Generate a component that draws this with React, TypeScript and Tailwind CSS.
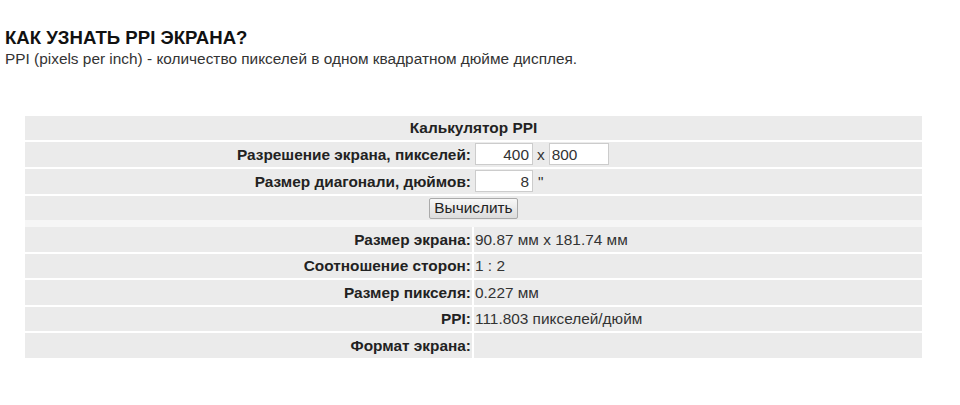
export default function App() {
  const results = [
    { label: "Размер экрана:", value: "90.87 мм x 181.74 мм" },
    { label: "Соотношение сторон:", value: "1 : 2" },
    { label: "Размер пикселя:", value: "0.227 мм" },
    { label: "PPI:", value: "111.803 пикселей/дюйм" },
    { label: "Формат экрана:", value: "" },
  ];

  return (
    <div className="w-[960px] h-[405px] bg-white text-[#222] font-['Liberation_Sans',Arial,sans-serif] overflow-hidden">
      <div className="pl-[5px] pt-[27px]">
        <h1 className="text-[18.6px] leading-[22px] font-bold text-[#111]">КАК УЗНАТЬ PPI ЭКРАНА?</h1>
        <p className="text-[15.4px] leading-[18px] mt-[1px] text-[#333]">
          PPI (pixels per inch) - количество пикселей в одном квадратном дюйме дисплея.
        </p>
      </div>

      {/* calculator form */}
      <div className="ml-[25px] mt-[48px] w-[897px] flex flex-col gap-[2px] text-[15.4px]">
        <div className="h-[24px] bg-[#ebebeb] flex items-center justify-center font-bold">Калькулятор PPI</div>
        <div className="h-[25px] bg-[#ebebeb] grid grid-cols-[447px_1fr] gap-x-[2px] items-center">
          <div className="text-right font-bold pr-[1px]">Разрешение экрана, пикселей:</div>
          <div className="flex items-center pl-[1px]">
            <input
              defaultValue="400"
              className="w-[58px] h-[22px] bg-white border border-[#ccc] text-right px-[3px] text-[15.4px] text-[#333] outline-none"
            />
            <span className="mx-[4px] text-[#333]">x</span>
            <input
              defaultValue="800"
              className="w-[60px] h-[22px] bg-white border border-[#ccc] text-left px-[2px] text-[15.4px] text-[#333] outline-none"
            />
          </div>
        </div>
        <div className="h-[25px] bg-[#ebebeb] grid grid-cols-[447px_1fr] gap-x-[2px] items-center">
          <div className="text-right font-bold pr-[1px]">Размер диагонали, дюймов:</div>
          <div className="flex items-center pl-[1px]">
            <input
              defaultValue="8"
              className="w-[58px] h-[22px] bg-white border border-[#ccc] text-right px-[3px] text-[15.4px] text-[#333] outline-none"
            />
            <span className="ml-[5px] text-[#333]">"</span>
          </div>
        </div>
        <div className="h-[24px] bg-[#ebebeb] flex items-center justify-center">
          <button className="w-[89px] h-[21px] border border-[#aaa] rounded-[2px] bg-gradient-to-b from-[#f8f8f8] to-[#dcdcdc] text-[15.4px] leading-[18px] text-[#222]">
            Вычислить
          </button>
        </div>
      </div>

      <div className="ml-[25px] w-[897px] h-[7px] bg-[#f6f6f6]" />

      {/* results */}
      <div className="ml-[25px] w-[897px] grid grid-cols-[447px_1fr] gap-x-[2px] gap-y-[2px] text-[15.4px]">
        {results.map((r) => (
          <div key={r.label} className="contents">
            <div className="h-[24.5px] bg-[#ebebeb] flex items-center justify-end font-bold pr-[1px]">{r.label}</div>
            <div className="h-[24.5px] bg-[#ebebeb] flex items-center pl-[1px] text-[#333]">{r.value}</div>
          </div>
        ))}
      </div>
    </div>
  );
}
